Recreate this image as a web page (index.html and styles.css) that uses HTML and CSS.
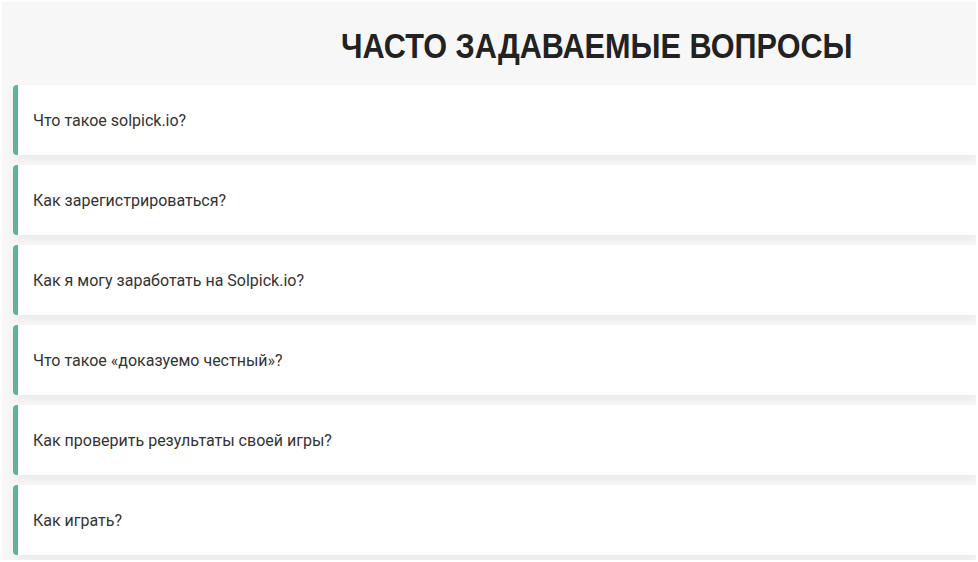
FILE: index.html
```html
<!DOCTYPE html>
<html>
<head>
  <title>Часто задаваемые вопросы</title>
  <link rel="stylesheet" href="styles.css">
</head>
<body>

  <div class="page">
    <h1 class="faq-title"><span>ЧАСТО ЗАДАВАЕМЫЕ ВОПРОСЫ</span></h1>

    <div class="faq-list">
      <div class="faq-item">Что такое solpick.io?</div>
      <div class="faq-item">Как зарегистрироваться?</div>
      <div class="faq-item">Как я могу заработать на Solpick.io?</div>
      <div class="faq-item">Что такое «доказуемо честный»?</div>
      <div class="faq-item">Как проверить результаты своей игры?</div>
      <div class="faq-item">Как играть?</div>
    </div>
  </div>

</body>
</html>
```

FILE: styles.css
```css
body {
  margin: 0;
  background: #fff;
  font-family: Roboto, "Liberation Sans", sans-serif;
}
.page {
  margin: 2px 2px 0 2px;
  height: 558px;
  background: #f7f7f7;
  overflow: hidden;
}
.faq-title {
  margin: 0;
  height: 83px;
  padding-left: 339px;
  font-family: "Liberation Sans", Arial, sans-serif;
  font-size: 35px;
  font-weight: bold;
  line-height: 88px;
  color: #222;
}
/* narrow face isn't available, squeeze the regular one */
.faq-title span {
  display: inline-block;
  transform: scaleX(0.875);
  transform-origin: left center;
}
.faq-list {
  display: flex;
  flex-direction: column;
  gap: 10px;
  padding-left: 11px;
}
.faq-item {
  height: 70px;
  display: flex;
  align-items: center;
  padding-left: 15px;
  background: #fff;
  border-left: 5px solid #5fb391;
  border-radius: 4px 0 0 4px;
  box-shadow: 0 5px 8px rgba(0, 0, 0, 0.05);
  font-size: 16px;
  color: #333;
}
```
